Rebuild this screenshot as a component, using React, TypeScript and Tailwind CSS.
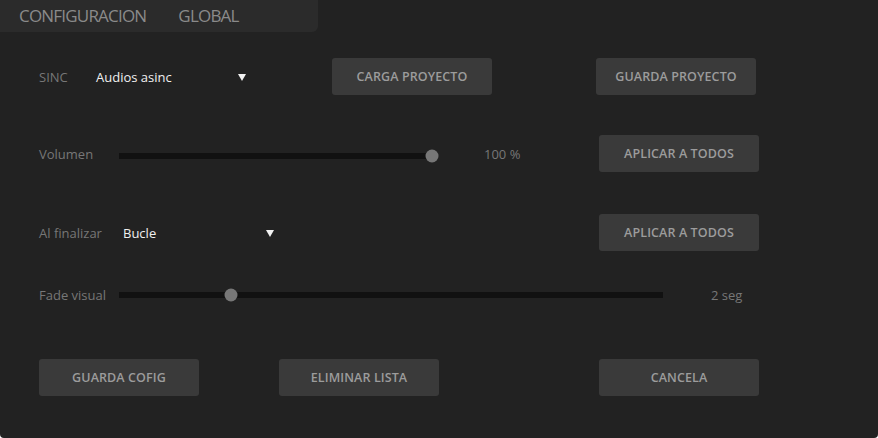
import React from 'react';

const font = { fontFamily: '"Open Sans", "Noto Sans", sans-serif' };

function Btn({ label, className = '' }: { label: string; className?: string }) {
  return (
    <button
      className={`h-[37px] w-[160px] shrink-0 rounded-[3px] bg-[#3a3a3a] pt-[1px] text-[12.5px] font-semibold tracking-[0.1px] text-[#9c9c9c] ${className}`}
    >
      {label}
    </button>
  );
}

function Caret() {
  return (
    <svg width="8" height="7" viewBox="0 0 8 7" className="shrink-0">
      <path d="M0 0 H8 L4 7 Z" fill="#f2f2f2" />
    </svg>
  );
}

function Slider({ width, pos }: { width: number; pos: number }) {
  return (
    <div className="relative h-[6px] shrink-0 bg-[#111111]" style={{ width }}>
      <div
        className="absolute top-1/2 h-[13px] w-[13px] -translate-x-1/2 -translate-y-1/2 rounded-full bg-[#777777]"
        style={{ left: pos }}
      />
    </div>
  );
}

export default function App() {
  return (
    <div className="h-[438px] w-[878px] overflow-hidden rounded-b-[4px] bg-[#222222]" style={font}>
      {/* tabs */}
      <div className="flex h-[32px] w-[318px] items-center gap-[32px] rounded-br-[6px] bg-[#2b2b2b] pl-[19px] text-[17px] font-medium tracking-[-0.8px] text-[#8a8a8a]">
        <span>CONFIGURACION</span>
        <span>GLOBAL</span>
      </div>

      {/* sinc row */}
      <div className="mt-[26px] flex items-center">
        <span className="w-[96px] shrink-0 pl-[39px] pt-[2px] text-[13px] text-[#777777]">SINC</span>
        <div className="flex w-[154px] shrink-0 items-center justify-between pr-[4px] pt-[2px]">
          <span className="text-[13px] text-[#f0f0f0]">Audios asinc</span>
          <Caret />
        </div>
        <Btn label="CARGA PROYECTO" className="ml-[82px]" />
        <Btn label="GUARDA PROYECTO" className="ml-[104px]" />
      </div>

      {/* volumen row */}
      <div className="mt-[40px] flex items-center">
        <span className="w-[119px] shrink-0 pl-[39px] pt-[3px] text-[13px] text-[#777777]">Volumen</span>
        <div className="pt-[4px]">
          <Slider width={315} pos={313} />
        </div>
        <span className="ml-[50px] w-[115px] shrink-0 pt-[3px] text-[13px] text-[#777777]">100 %</span>
        <Btn label="APLICAR A TODOS" />
      </div>

      {/* al finalizar row */}
      <div className="mt-[42px] flex items-center">
        <span className="w-[123px] shrink-0 pl-[39px] pt-[2px] text-[13px] text-[#777777]">Al finalizar</span>
        <div className="flex w-[155px] shrink-0 items-center justify-between pr-[4px] pt-[2px]">
          <span className="text-[13px] text-[#f0f0f0]">Bucle</span>
          <Caret />
        </div>
        <Btn label="APLICAR A TODOS" className="ml-[321px]" />
      </div>

      {/* fade row */}
      <div className="mt-[34px] flex h-[20px] items-center">
        <span className="w-[119px] shrink-0 pl-[39px] pt-[2px] text-[13px] text-[#777777]">Fade visual</span>
        <Slider width={544} pos={112} />
        <span className="ml-[48px] pt-[2px] text-[13px] text-[#777777]">2 seg</span>
      </div>

      {/* bottom buttons */}
      <div className="mt-[54px] flex items-center pl-[39px]">
        <Btn label="GUARDA COFIG" />
        <Btn label="ELIMINAR LISTA" className="ml-[80px]" />
        <Btn label="CANCELA" className="ml-[160px]" />
      </div>
    </div>
  );
}
